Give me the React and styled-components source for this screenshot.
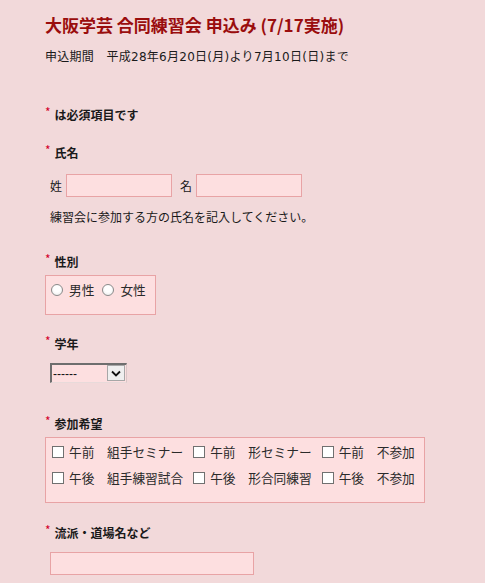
import React from "react";
import styled, { createGlobalStyle } from "styled-components";

const Global = createGlobalStyle`
  html, body { margin: 0; padding: 0; background: #f2d9da; }
  body { font-family: "Noto Sans CJK JP", "Noto Sans", sans-serif; color: #1a1a1a; }
  * { box-sizing: border-box; }
`;

const Page = styled.div`
  display: flex;
  flex-direction: column;
  padding: 15px 0 20px 45px;
  min-height: 583px;
`;

const Title = styled.h1`
  margin: 0;
  font-size: 17px;
  line-height: 20px;
  font-weight: bold;
  color: #9a0d0d;
`;

const Period = styled.p`
  margin: 14px 0 0;
  font-family: "DejaVu Sans", "Noto Sans CJK JP", sans-serif;
  font-size: 12px;
  letter-spacing: 0.28px;
  line-height: 16px;
`;

const Note = styled.div`
  margin-top: 42px;
  font-size: 12px;
  line-height: 16px;
  font-weight: bold;
`;

const Star = styled.span`
  color: #d4002a;
  font-weight: normal;
  font-size: 12px;
  position: relative;
  top: -3px;
  margin-right: 4px;
`;

const Field = styled.div`
  display: flex;
  flex-direction: column;
  align-items: flex-start;
  margin-top: ${(p) => p.$gap}px;
`;

const Label = styled.div`
  font-size: 12px;
  line-height: 16px;
  font-weight: bold;
`;

const Content = styled.div`
  margin-top: ${(p) => p.$gap}px;
  margin-left: ${(p) => p.$indent || 0}px;
  display: flex;
  flex-direction: column;
  align-items: flex-start;
`;

const NameRow = styled.div`
  display: flex;
  align-items: center;
  font-size: 12px;
`;

const NameTag = styled.span`
  margin-right: 4px;
  margin-left: ${(p) => p.$ml || 0}px;
`;

const TextInput = styled.input`
  width: ${(p) => p.$w}px;
  height: 23px;
  background: #fddfe0;
  border: 1px solid #e8a3a5;
  outline: none;
  padding: 2px 4px;
  font: inherit;
`;

const Help = styled.p`
  margin: 12px 0 0;
  font-size: 12px;
  line-height: 16px;
`;

const ChoiceBox = styled.div`
  width: ${(p) => p.$w}px;
  height: ${(p) => p.$h}px;
  background: #fddfe0;
  border: 1px solid #e8a3a5;
  padding: 6px 0 0 5px;
  display: flex;
  flex-direction: column;
  gap: 10px;
`;

const ChoiceRow = styled.div`
  display: flex;
  align-items: center;
`;

const Choice = styled.label`
  display: flex;
  align-items: center;
  font-size: 12.7px;
  line-height: 16px;
  color: #2a2a2a;
  margin-right: ${(p) => p.$mr || 8}px;
  white-space: pre;
`;

const Radio = styled.input.attrs({ type: "radio" })`
  appearance: none;
  margin: 0 6px 0 0;
  width: 12px;
  height: 12px;
  border-radius: 50%;
  border: 1px solid #8a8a8a;
  background: radial-gradient(circle at 50% 40%, #ffffff 40%, #e6e6e6 100%);
`;

const Check = styled.input.attrs({ type: "checkbox" })`
  appearance: none;
  margin: 0 5px 0 1px;
  width: 12px;
  height: 12px;
  border: 1px solid #707070;
  background: #ffffff;
`;

const SelectWrap = styled.div`
  display: flex;
  align-items: stretch;
  width: 77px;
  height: 20px;
  background: #fddfe0;
  border-top: 2px solid #6e6e6e;
  border-left: 2px solid #6e6e6e;
  border-right: 1px solid #d9c6c6;
  border-bottom: 1px solid #e8dada;
`;

const Select = styled.select`
  appearance: none;
  flex: 1;
  min-width: 0;
  border: none;
  outline: none;
  background: transparent;
  font-family: "Liberation Sans", sans-serif;
  font-size: 12px;
  padding: 0 0 0 1px;
  color: #111;
`;

const Arrow = styled.span`
  width: 18px;
  display: flex;
  align-items: center;
  justify-content: center;
  background: #efefef;
  border: 1px solid #a7a7a7;
  margin: 0 1px 1px 0;
`;

export default function App() {
  return (
    <>
      <Global />
      <Page>
        <Title>大阪学芸 合同練習会 申込み (7/17実施)</Title>
        <Period>申込期間　平成28年6月20日(月)より7月10日(日)まで</Period>
        <Note>
          <Star>*</Star>は必須項目です
        </Note>

        <Field $gap={22}>
          <Label><Star>*</Star>氏名</Label>
          <Content $gap={13} $indent={5}>
            <NameRow>
              <NameTag>姓</NameTag>
              <TextInput $w={106} />
              <NameTag $ml={8}>名</NameTag>
              <TextInput $w={106} />
            </NameRow>
            <Help>練習会に参加する方の氏名を記入してください。</Help>
          </Content>
        </Field>

        <Field $gap={29}>
          <Label><Star>*</Star>性別</Label>
          <Content $gap={5}>
            <ChoiceBox $w={111} $h={40}>
              <ChoiceRow>
                <Choice><Radio name="sex" />男性</Choice>
                <Choice><Radio name="sex" />女性</Choice>
              </ChoiceRow>
            </ChoiceBox>
          </Content>
        </Field>

        <Field $gap={21}>
          <Label><Star>*</Star>学年</Label>
          <Content $gap={11} $indent={5}>
            <SelectWrap>
              <Select defaultValue="">
                <option value="">------</option>
              </Select>
              <Arrow>
                <svg width="10" height="7" viewBox="0 0 10 7">
                  <path d="M1 1.5 L5 5.5 L9 1.5" fill="none" stroke="#111" strokeWidth="1.8" />
                </svg>
              </Arrow>
            </SelectWrap>
          </Content>
        </Field>

        <Field $gap={33}>
          <Label><Star>*</Star>参加希望</Label>
          <Content $gap={5}>
            <ChoiceBox $w={380} $h={66}>
              <ChoiceRow>
                <Choice $mr={9}><Check />午前　組手セミナー</Choice>
                <Choice $mr={9}><Check />午前　形セミナー</Choice>
                <Choice><Check />午前　不参加</Choice>
              </ChoiceRow>
              <ChoiceRow>
                <Choice $mr={9}><Check />午後　組手練習試合</Choice>
                <Choice $mr={9}><Check />午後　形合同練習</Choice>
                <Choice><Check />午後　不参加</Choice>
              </ChoiceRow>
            </ChoiceBox>
          </Content>
        </Field>

        <Field $gap={22}>
          <Label><Star>*</Star>流派・道場名など</Label>
          <Content $gap={11} $indent={5}>
            <TextInput $w={204} />
          </Content>
        </Field>
      </Page>
    </>
  );
}
